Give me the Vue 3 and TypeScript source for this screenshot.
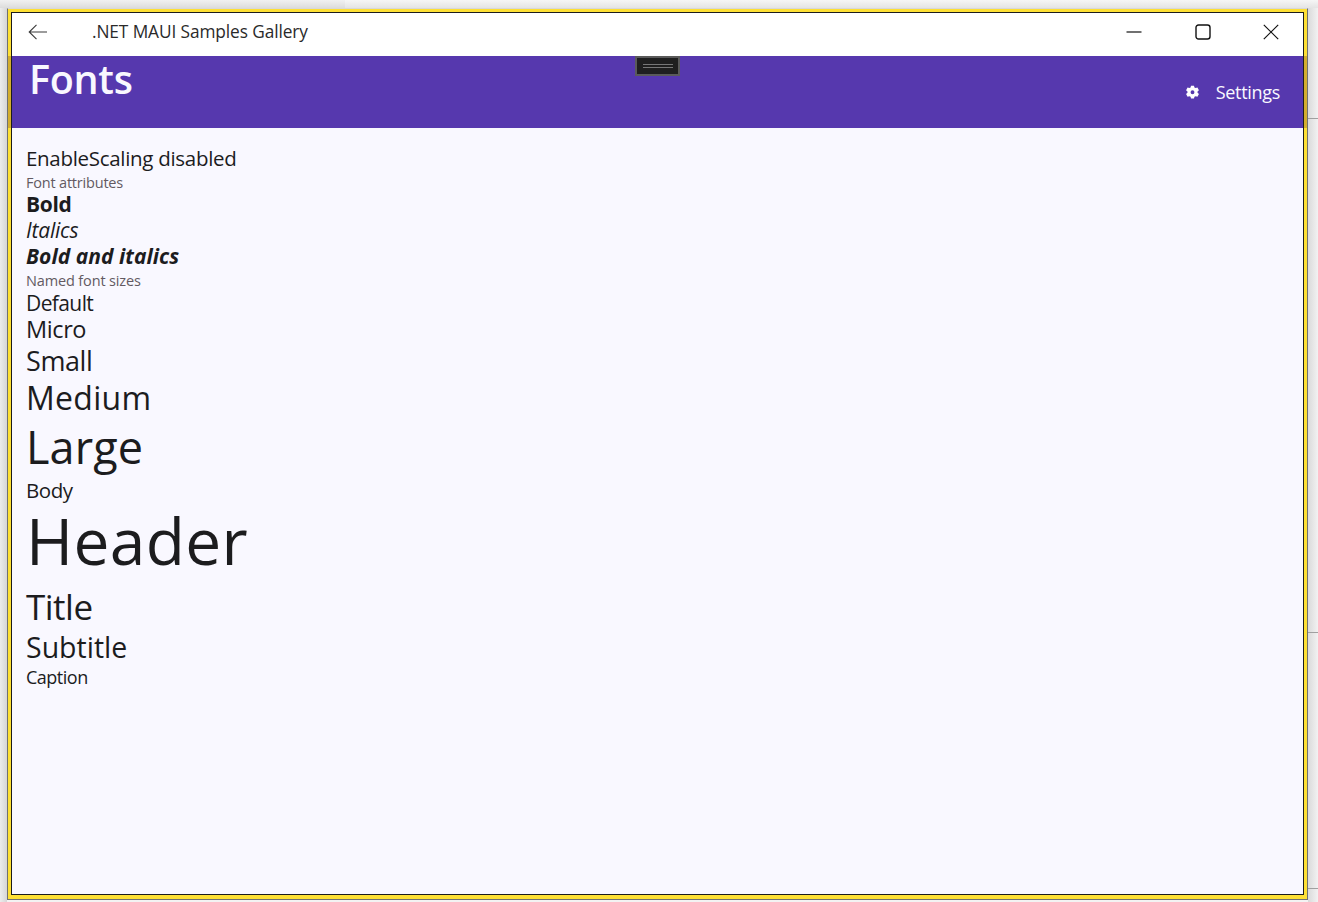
<script setup lang="ts">
interface Line { text: string; cls: string }
const lines: Line[] = [
  { text: 'EnableScaling disabled', cls: 'l-first' },
  { text: 'Font attributes', cls: 'l-sub' },
  { text: 'Bold', cls: 'l-bold' },
  { text: 'Italics', cls: 'l-italic' },
  { text: 'Bold and italics', cls: 'l-bolditalic' },
  { text: 'Named font sizes', cls: 'l-sub l-sub2' },
  { text: 'Default', cls: 'l-default' },
  { text: 'Micro', cls: 'l-micro' },
  { text: 'Small', cls: 'l-small' },
  { text: 'Medium', cls: 'l-medium' },
  { text: 'Large', cls: 'l-large' },
  { text: 'Body', cls: 'l-body' },
  { text: 'Header', cls: 'l-header' },
  { text: 'Title', cls: 'l-title' },
  { text: 'Subtitle', cls: 'l-subtitle' },
  { text: 'Caption', cls: 'l-caption' },
]
</script>

<template>
  <div class="desktop">
    <div class="window">
      <div class="frame">
        <div class="inner">
          <header class="titlebar">
            <svg class="back" width="20" height="16" viewBox="0 0 20 16" fill="none" stroke="#3a3a3a" stroke-width="1.1">
              <path d="M1 8H19M8.5 .8 1.2 8l7.3 7.2" />
            </svg>
            <span class="apptitle">.NET MAUI Samples Gallery</span>
            <div class="controls">
              <svg width="16" height="16" viewBox="0 0 16 16" fill="none" stroke="#111" stroke-width="1.2">
                <path d="M.5 8h15" />
              </svg>
              <svg width="16" height="16" viewBox="0 0 16 16" fill="none" stroke="#111" stroke-width="1.4">
                <rect x="1" y="1" width="14" height="14" rx="2.5" />
              </svg>
              <svg width="16" height="16" viewBox="0 0 16 16" fill="none" stroke="#111" stroke-width="1.2">
                <path d="M.8.8l14.4 14.4M15.2.8.8 15.2" />
              </svg>
            </div>
          </header>
          <section class="appbar">
            <h1 class="pagetitle">Fonts</h1>
            <div class="handle"><span class="grip"></span></div>
            <div class="settings">
              <svg class="gear" width="15" height="15" viewBox="0 0 14 14">
                <path fill="#fff" fill-rule="evenodd" d="M5.6.6h2.8l.4 1.7 1.1.6 1.7-.5 1.4 2.4-1.3 1.2v1.3l1.3 1.2-1.4 2.4-1.7-.5-1.1.6-.4 1.7H5.6l-.4-1.7-1.1-.6-1.7.5L1 8.5 2.3 7.3V6L1 4.8l1.4-2.4 1.7.5 1.1-.6zM7 5a1.8 1.8 0 1 0 0 3.6A1.8 1.8 0 0 0 7 5z" />
              </svg>
              <span>Settings</span>
            </div>
          </section>
          <main class="content">
            <div v-for="l in lines" :key="l.text" :class="['line', l.cls]">{{ l.text }}</div>
          </main>
        </div>
      </div>
    </div>
    <div class="side">
      <i class="tick t1"></i>
      <i class="tick t2"></i>
      <i class="tick t3"></i>
    </div>
  </div>
</template>

<style>
html, body { margin: 0; padding: 0; background: #f3f3f3; overflow: hidden; }
</style>

<style scoped>
.desktop {
  width: 1318px;
  height: 902px;
  box-sizing: border-box;
  padding: 8px 0 0 7px;
  display: flex;
  align-items: flex-start;
  background:
    linear-gradient(180deg, #f1f1f1 0, #dcdcdc 8px, transparent 8px) 0 0 / 345px 100% no-repeat,
    linear-gradient(180deg, #f6f6f6 0, #e4e4e4 8px, transparent 8px),
    linear-gradient(90deg, #ececec 0, #d6d6d6 7px, transparent 7px),
    linear-gradient(270deg, #f2f2f2 0, #dadada 10px, transparent 10px),
    #f3f3f3;
  font-family: "Open Sans", "Noto Sans", sans-serif;
  color: #1c1c1e;
  overflow: hidden;
}
.window {
  width: 1301px;
  height: 892px;
  flex: none;
  box-sizing: border-box;
  border: 1px solid #707070;
  border-top-color: #d8d8d8;
}
.frame {
  height: 100%;
  box-sizing: border-box;
  border: 3px solid transparent;
  border-bottom-width: 4px;
  background: linear-gradient(180deg, #fee034 0 47px, #d3ad2e 47px 119px, #fee034 119px) border-box;
}
.inner {
  height: 100%;
  box-sizing: border-box;
  border: 1px solid #1c1c1c;
  display: flex;
  flex-direction: column;
  background: #f9f8ff;
}
.titlebar {
  height: 43px;
  flex: none;
  display: flex;
  align-items: center;
  background: #fff;
  box-sizing: border-box;
  padding: 0 0 5px 16px;
}
.back { flex: none; }
.apptitle {
  margin-left: 44px;
  margin-top: -1px;
  font-size: 17.3px;
  letter-spacing: -.1px;
  color: #2a2a2a;
}
.controls {
  margin-left: auto;
  display: flex;
  gap: 53px;
  padding-right: 24px;
}
.controls svg:last-child { margin-left: -1px; }
.appbar {
  height: 72px;
  flex: none;
  background: #5638ae;
  display: flex;
  align-items: flex-start;
  padding: 0 23px 0 17px;
  color: #f9f8ff;
  position: relative;
}
.pagetitle {
  margin: 0;
  font-size: 39.5px;
  line-height: 47px;
  font-weight: 600;
  letter-spacing: -.3px;
}
.handle {
  position: absolute;
  left: 623px;
  top: 0;
  width: 45px;
  height: 20px;
  box-sizing: border-box;
  background: #1f1f1f;
  border: 2px solid #5a5a5a;
  display: flex;
  align-items: center;
  justify-content: center;
}
.grip {
  display: block;
  width: 30px;
  height: 4px;
  box-sizing: border-box;
  border-top: 1px solid #777;
  border-bottom: 1px solid #777;
}
.settings {
  margin-left: auto;
  height: 72px;
  display: flex;
  align-items: center;
  gap: 16px;
  font-size: 18px;
  letter-spacing: -.3px;
}
.gear { flex: none; }
.content {
  flex: 1;
  padding: 15px 0 0 14px;
  display: flex;
  flex-direction: column;
  align-items: flex-start;
}
.line { white-space: nowrap; }
.l-first { font-size: 20.5px; line-height: 30px; letter-spacing: -.3px; }
.l-sub { font-size: 14.5px; line-height: 20px; color: #635a62; letter-spacing: -.2px; }
.l-sub2 { margin-top: 2px; letter-spacing: -.14px; }
.l-bold { font-size: 21px; line-height: 26px; font-weight: 700; letter-spacing: -.3px; margin-top: -2px; }
.l-italic { font-size: 21px; line-height: 26px; font-style: italic; letter-spacing: -.2px; }
.l-bolditalic { font-size: 21px; line-height: 26px; font-weight: 700; font-style: italic; letter-spacing: .05px; }
.l-default { font-size: 21px; line-height: 26px; letter-spacing: -.6px; margin-top: -1px; }
.l-micro { font-size: 23.5px; line-height: 28px; letter-spacing: -.4px; margin-top: -1px; }
.l-small { font-size: 27px; line-height: 36px; letter-spacing: -.4px; }
.l-medium { font-size: 32px; line-height: 38px; letter-spacing: .3px; }
.l-large { font-size: 45px; line-height: 60px; letter-spacing: .1px; }
.l-body { font-size: 20.5px; line-height: 26px; letter-spacing: -.45px; }
.l-header { font-size: 64px; line-height: 78px; letter-spacing: .35px; margin-top: -1px; }
.l-title { font-size: 35px; line-height: 52px; letter-spacing: -.5px; margin-top: 1px; }
.l-subtitle { font-size: 28.5px; line-height: 28px; letter-spacing: 0; }
.l-caption { font-size: 18px; line-height: 32px; letter-spacing: -.5px; }
.side { flex: 1; position: relative; align-self: stretch; }
.tick { position: absolute; left: 0; right: 0; height: 1px; background: #a0a0a0; }
.t1 { top: 110px; }
.t2 { top: 624px; }
.t3 { top: 880px; }
</style>
